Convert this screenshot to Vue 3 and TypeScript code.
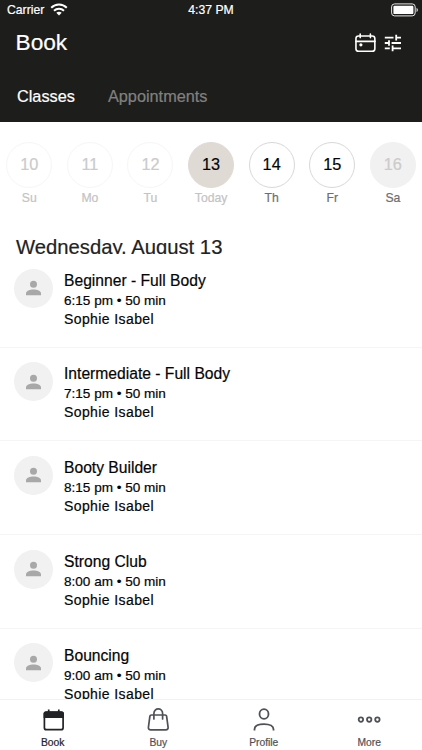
<script setup lang="ts">
interface Day {
  num: number
  label: string
  state: 'past' | 'today' | 'open' | 'closed'
}
interface ClassItem {
  title: string
  time: string
  teacher: string
}

const days: Day[] = [
  { num: 10, label: 'Su', state: 'past' },
  { num: 11, label: 'Mo', state: 'past' },
  { num: 12, label: 'Tu', state: 'past' },
  { num: 13, label: 'Today', state: 'today' },
  { num: 14, label: 'Th', state: 'open' },
  { num: 15, label: 'Fr', state: 'open' },
  { num: 16, label: 'Sa', state: 'closed' },
]

const classes: ClassItem[] = [
  { title: 'Beginner - Full Body', time: '6:15 pm • 50 min', teacher: 'Sophie Isabel' },
  { title: 'Intermediate - Full Body', time: '7:15 pm • 50 min', teacher: 'Sophie Isabel' },
  { title: 'Booty Builder', time: '8:15 pm • 50 min', teacher: 'Sophie Isabel' },
  { title: 'Strong Club', time: '8:00 am • 50 min', teacher: 'Sophie Isabel' },
  { title: 'Bouncing', time: '9:00 am • 50 min', teacher: 'Sophie Isabel' },
]
</script>

<template>
  <div class="screen">
    <header class="header">
      <div class="status">
        <div class="carrier">
          <span>Carrier</span>
          <svg class="wifi" width="18" height="13" viewBox="0 0 18 13">
            <g fill="none" stroke="#fff" stroke-width="2">
              <path d="M1.2 4.8C5.6.5 12.4.5 16.8 4.8" />
              <path d="M4 7.8c2.8-2.7 7.2-2.7 10 0" />
            </g>
            <path d="M6.3 9.8c1.5-1.4 3.9-1.4 5.4 0L9 12.5z" fill="#fff" />
          </svg>
        </div>
        <span class="clock">4:37 PM</span>
        <svg class="battery" width="28" height="14" viewBox="0 0 28 14">
          <rect x=".6" y=".9" width="23.6" height="12" rx="3" fill="none" stroke="#e8e8e8" />
          <rect x="2.4" y="2.7" width="20" height="8.4" rx="1.2" fill="#fff" />
          <path d="M25.5 4.8c2 .8 2 3.5 0 4.3z" fill="#ccc" />
        </svg>
      </div>
      <div class="titlebar">
        <h1>Book</h1>
        <div class="actions">
          <svg width="21" height="20" viewBox="0 0 21 20" fill="none" stroke="#fff" stroke-width="1.6" stroke-linecap="round">
            <rect x=".95" y="3" width="18.9" height="15.3" rx="2.6" />
            <path d="M1 8.4h19M5.2 1v3.6M15.4 1v3.6" />
            <circle cx="5.9" cy="11.8" r="1.6" fill="#fff" stroke="none" />
          </svg>
          <svg class="tune" width="18" height="18" viewBox="0 0 18 18" fill="none" stroke="#fff" stroke-width="1.8">
            <path d="M.8 3.600h8.700M12.200 3.600H17M12.200 .8v5.600M.8 9H5M5 6.200v5.600M7.600 9H17M.8 14.400h5M8.600 11.600v5.600M8.600 14.400H17" />
          </svg>
        </div>
      </div>
      <nav class="tabs">
        <span class="tab active">Classes</span>
        <span class="tab">Appointments</span>
      </nav>
    </header>

    <section class="days">
      <div v-for="day in days" :key="day.num" class="day" :class="day.state">
        <div class="circle">{{ day.num }}</div>
        <span class="label">{{ day.label }}</span>
      </div>
    </section>

    <main class="list">
      <h2>Wednesday, August 13</h2>
      <article v-for="item in classes" :key="item.title" class="row">
        <div class="avatar">
          <svg width="15" height="16" viewBox="0 0 15 16" fill="#a8a8a8">
            <circle cx="7.500" cy="4.200" r="3.500" />
            <path d="M0 15.200v-1.700c0-2.700 3.900-4 7.500-4s7.500 1.300 7.500 4v1.700z" />
          </svg>
        </div>
        <div class="info">
          <div class="title">{{ item.title }}</div>
          <div class="time">{{ item.time }}</div>
          <div class="teacher">{{ item.teacher }}</div>
        </div>
      </article>
    </main>

    <footer class="bottom">
      <div class="item current">
        <svg width="24" height="24" viewBox="0 0 24 24">
          <rect x="3.400" y="4.200" width="18.700" height="17.500" rx="2" fill="none" stroke="#222327" stroke-width="1.700" />
          <path d="M2.600 10V5.500q0-2 2-2h16.300q2 0 2 2V10z" fill="#222327" />
          <path d="M7.700 1.500v3M17.800 1.500v3" stroke="#222327" stroke-width="1.700" />
        </svg>
        <span>Book</span>
      </div>
      <div class="item">
        <svg width="24" height="24" viewBox="0 0 24 24" fill="none" stroke="#505157" stroke-width="1.700" stroke-linejoin="round" stroke-linecap="round">
          <path d="M5.300 7h13.900q1.200 0 1.400 1.200l1.500 11.100q.2 2.500-2.300 2.500H4.700q-2.500 0-2.300-2.500L3.900 8.200Q4.100 7 5.300 7z" />
          <path d="M7.900 10.900V5.500C7.900-.7 16.600-.7 16.600 5.500v5.400" />
        </svg>
        <span>Buy</span>
      </div>
      <div class="item">
        <svg width="24" height="24" viewBox="0 0 24 24" fill="none" stroke="#505157" stroke-width="1.800">
          <ellipse cx="12" cy="6" rx="4.500" ry="4.900" />
          <path d="M2.500 22.500v-1.200c0-3 3.300-5.200 9.500-5.200s9.500 2.200 9.500 5.200v1.200" />
        </svg>
        <span>Profile</span>
      </div>
      <div class="item">
        <svg width="24" height="24" viewBox="0 0 24 24" fill="none" stroke="#505157" stroke-width="1.800">
          <circle cx="3.900" cy="11.600" r="2.200" />
          <circle cx="12.200" cy="11.600" r="2.200" />
          <circle cx="20.400" cy="11.600" r="2.200" />
        </svg>
        <span>More</span>
      </div>
    </footer>
  </div>
</template>

<style>
body {
  margin: 0;
  background: #fff;
}
</style>

<style scoped>
.screen {
  display: flex;
  flex-direction: column;
  width: 422px;
  height: 750px;
  overflow: hidden;
  background: #fff;
  color: #050505;
  font-family: "Liberation Sans", Arial, sans-serif;
  -webkit-text-stroke: 0.2px currentColor;
}
svg {
  display: block;
  flex: none;
}
.header {
  flex: none;
  box-sizing: border-box;
  height: 122px;
  background: #1d1d1b;
  color: #fff;
}
.status {
  display: grid;
  grid-template-columns: 1fr auto 1fr;
  align-items: center;
  height: 19px;
  padding: 0 4px 0 7px;
  font-size: 12.2px;
}
.carrier {
  display: flex;
  align-items: center;
  gap: 6px;
}
.clock {
  margin-left: -3px;
}
.battery {
  justify-self: end;
  margin-right: -1px;
}
.titlebar {
  display: flex;
  align-items: center;
  justify-content: space-between;
  height: 47px;
  padding: 0 20px 0 15.500px;
}
h1 {
  margin: 0;
  font-size: 22.7px;
  font-weight: 400;
}
.actions {
  display: flex;
  align-items: center;
  gap: 8px;
}
.tabs {
  display: flex;
  gap: 33px;
  padding: 20px 17px 0;
  font-size: 16.3px;
  line-height: 20px;
}
.tab {
  color: #81817f;
}
.tab.active {
  color: #fff;
}
.days {
  flex: none;
  display: grid;
  grid-template-columns: repeat(7, 60.6px);
  box-sizing: border-box;
  height: 112px;
  padding: 19.5px 0 0;
  margin-left: -1px;
}
.day {
  display: flex;
  flex-direction: column;
  align-items: center;
  gap: 2px;
}
.circle {
  display: flex;
  align-items: center;
  justify-content: center;
  box-sizing: border-box;
  width: 46px;
  height: 46px;
  border: 1px solid #d8d8d8;
  border-radius: 50%;
  font-size: 16.3px;
}
.label {
  font-size: 12.2px;
  line-height: 16px;
  color: #6e6e6e;
}
.past .circle {
  border-color: #f6f6f6;
  color: #cbcbcb;
}
.past .label,
.today .label {
  color: #c3c3c3;
}
.today .circle {
  border-color: #e0dad5;
  background: #e0dad5;
}
.closed .circle {
  border-color: #f1f1f1;
  background: #f1f1f1;
  color: #cbcbcb;
}
.list {
  flex: 1;
  min-height: 0;
  overflow: hidden;
}
h2 {
  height: 20px;
  margin: 0;
  padding-left: 16px;
  overflow: hidden;
  font-size: 20.25px;
  font-weight: 400;
  line-height: 27px;
  color: #222;
}
.row {
  display: flex;
  gap: 11px;
  box-sizing: border-box;
  height: 93.700px;
  padding: 14.500px 0 0 14px;
  border-bottom: 1px solid #f5f5f5;
}
.avatar {
  display: flex;
  align-items: center;
  justify-content: center;
  width: 39px;
  height: 39px;
  border-radius: 50%;
  background: #f1f1f1;
}
.info {
  padding-top: 1.300px;
  white-space: nowrap;
}
.title {
  font-size: 15.650px;
  line-height: 21px;
}
.time {
  font-size: 13.550px;
  line-height: 19px;
}
.teacher {
  font-size: 14px;
  line-height: 19px;
  letter-spacing: 0.4px;
}
.bottom {
  flex: none;
  display: grid;
  grid-template-columns: repeat(4, 1fr);
  box-sizing: border-box;
  height: 51px;
  border-top: 1px solid #f1f1f1;
  background: #fff;
}
.item {
  display: flex;
  flex-direction: column;
  align-items: center;
  gap: 4px;
  padding-top: 8px;
  font-size: 10.300px;
  line-height: 14px;
  color: #505157;
}
.item.current {
  color: #222327;
}
</style>
